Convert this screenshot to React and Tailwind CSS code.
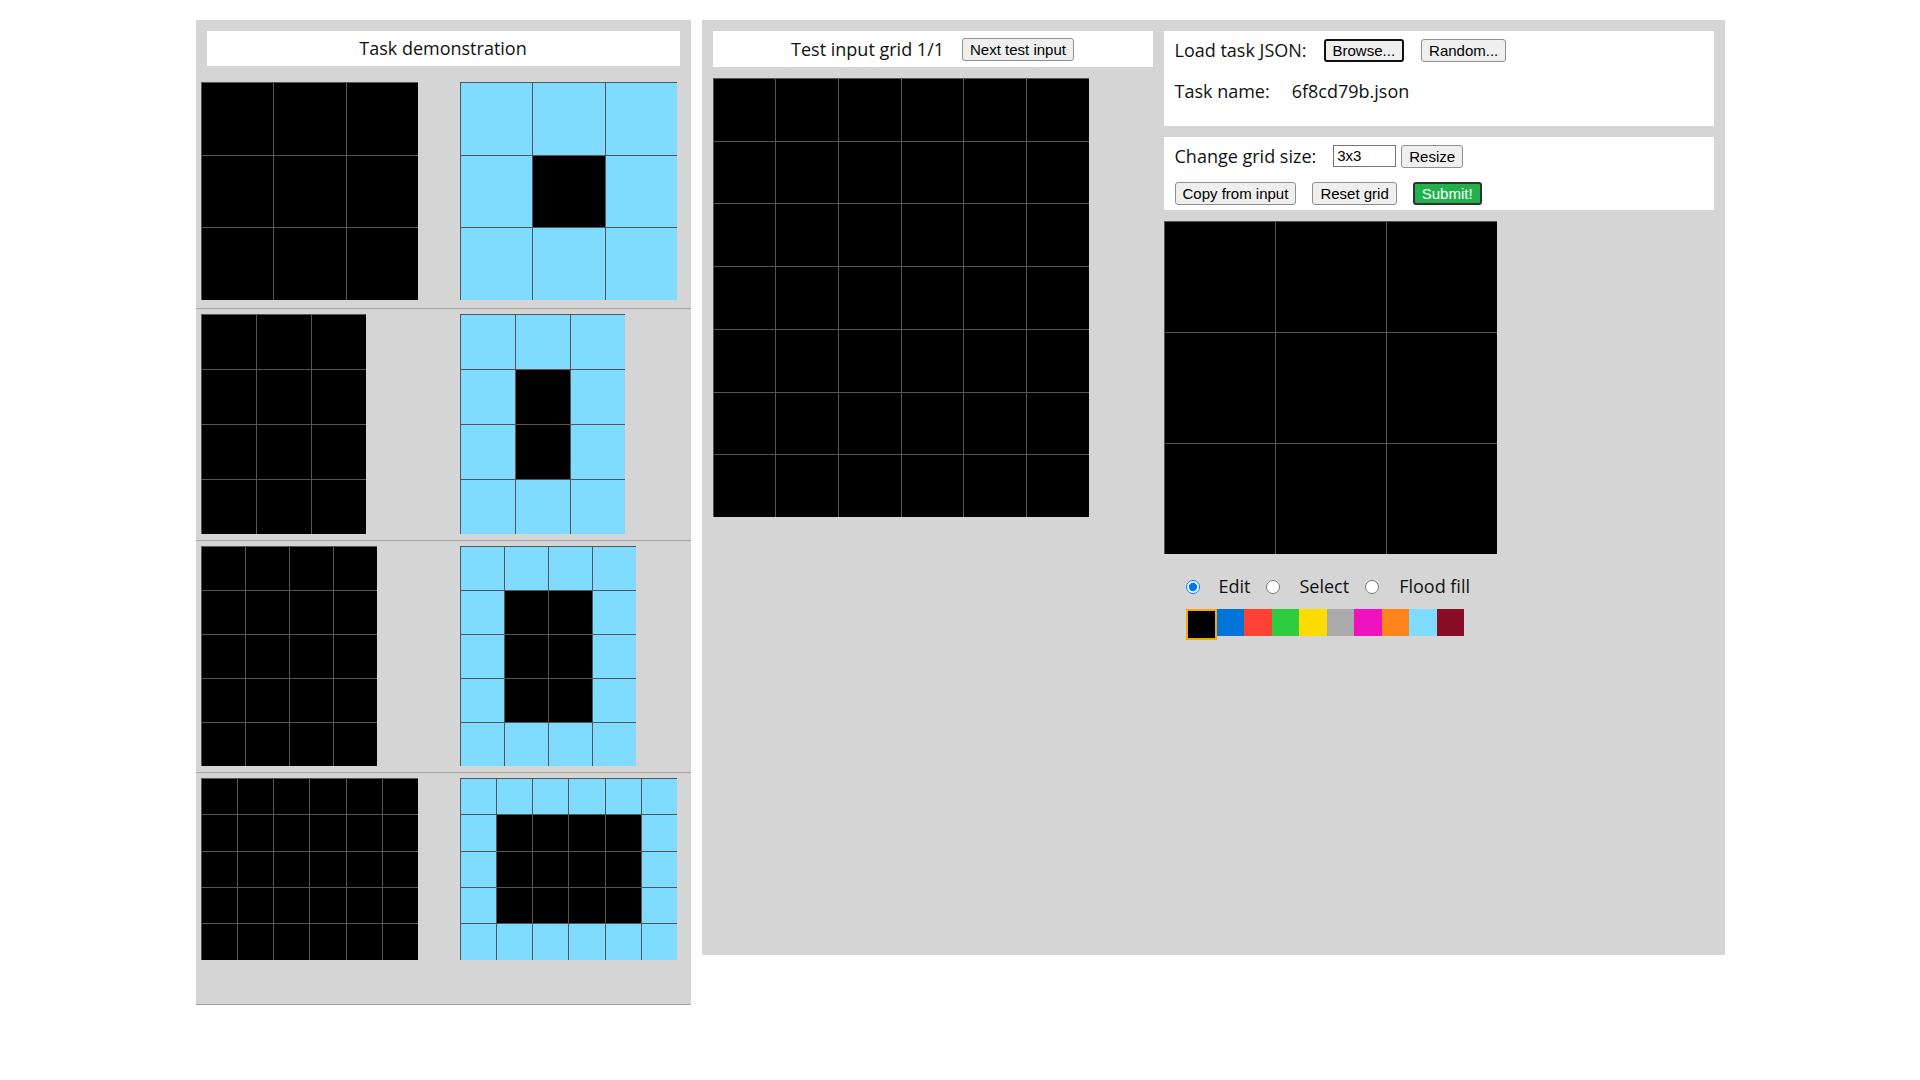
import React from "react";

const CELL = {
  0: "bg-black",
  8: "bg-[#7fdbff]",
};

const PALETTE = [
  "bg-black",
  "bg-[#0074d9]",
  "bg-[#ff4136]",
  "bg-[#2ecc40]",
  "bg-[#ffdc00]",
  "bg-[#aaaaaa]",
  "bg-[#f012be]",
  "bg-[#ff851b]",
  "bg-[#7fdbff]",
  "bg-[#870c25]",
];

function zeros(rows, cols) {
  return Array.from({ length: rows }, () => Array(cols).fill(0));
}

// frame of light blue round a black middle
function frame(rows, cols) {
  return Array.from({ length: rows }, (_, r) =>
    Array.from({ length: cols }, (_, c) =>
      r === 0 || c === 0 || r === rows - 1 || c === cols - 1 ? 8 : 0
    )
  );
}

const pairs = [
  { input: zeros(3, 3), output: frame(3, 3) },
  { input: zeros(4, 3), output: frame(4, 3) },
  { input: zeros(5, 4), output: frame(5, 4) },
  { input: zeros(5, 6), output: frame(5, 6) },
];

function Grid({ data, size }) {
  const rows = data.length;
  const cols = data[0].length;
  const cell = size / Math.max(rows, cols);
  return (
    <div className="flex flex-col">
      {data.map((row, r) => (
        <div key={r} className="flex">
          {row.map((v, c) => (
            <div
              key={c}
              className={`border-t border-l border-[#555] ${CELL[v]}`}
              style={{ width: cell, height: cell }}
            />
          ))}
        </div>
      ))}
    </div>
  );
}

function Btn({ children, className = "" }) {
  return (
    <button
      className={`h-[23px] px-[7px] rounded-[3px] font-['Liberation_Sans',Arial,sans-serif] text-[15px] leading-none ${className}`}
    >
      {children}
    </button>
  );
}

const plain = "bg-[#efefef] border border-[#8f8f8f] text-black";

export default function App() {
  return (
    <div className="min-h-screen bg-white flex justify-center items-start gap-[11px] pt-[20px] font-['Open_Sans',sans-serif] text-[18px] text-[#111]">
      {/* demonstration pairs */}
      <div className="w-[495px] bg-[#d5d5d5] flex flex-col">
        <div className="m-[11px] h-[35px] bg-white flex items-center justify-center">
          Task demonstration
        </div>
        {pairs.map((p, i) => (
          <div
            key={i}
            className="h-[232px] flex items-start pl-[5px] pt-[5px] pb-[6px] border-b border-[#a3a3a3]"
          >
            <div className="w-[259px]">
              <Grid data={p.input} size={i === 1 || i === 2 ? 220 : 218} />
            </div>
            <Grid data={p.output} size={i === 1 || i === 2 ? 220 : 218} />
          </div>
        ))}
      </div>

      <div className="w-[1023px] h-[935px] bg-[#d5d5d5] flex items-start gap-[11px] p-[11px]">
        {/* test input */}
        <div className="w-[440px] flex flex-col">
          <div className="h-[36px] bg-white flex items-center justify-center gap-[18px]">
            <span>Test input grid 1/1</span>
            <Btn className={plain}>Next test input</Btn>
          </div>
          <div className="mt-[11px]">
            <Grid data={zeros(7, 6)} size={439} />
          </div>
        </div>

        {/* output editor */}
        <div className="w-[550px] flex flex-col">
          <div className="h-[95px] bg-white px-[11px] pt-[8px]">
            <div className="h-[23px] flex items-center">
              <span>Load task JSON:</span>
              <Btn className="ml-[17px] bg-[#efefef] border-2 border-[#111] text-black">Browse...</Btn>
              <Btn className={`ml-[17px] ${plain}`}>Random...</Btn>
            </div>
            <div className="mt-[17px] h-[25px] flex items-center">
              <span>Task name:</span>
              <span className="ml-[22px]">6f8cd79b.json</span>
            </div>
          </div>

          <div className="mt-[11px] h-[73px] bg-white px-[11px] pt-[8px]">
            <div className="h-[22px] flex items-center">
              <span>Change grid size:</span>
              <input
                defaultValue="3x3"
                className="ml-[17px] w-[63px] h-[22px] border border-[#767676] px-[3px] font-['Liberation_Sans',Arial,sans-serif] text-[15px] text-black outline-none"
              />
              <Btn className={`ml-[5px] h-[22px] ${plain}`}>Resize</Btn>
            </div>
            <div className="mt-[15px] flex items-center">
              <Btn className={`h-[22px] ${plain}`}>Copy from input</Btn>
              <Btn className={`ml-[16px] h-[22px] ${plain}`}>Reset grid</Btn>
              <Btn className="ml-[16px] h-[22px] bg-[#22b14c] border-2 border-[#333] text-white">Submit!</Btn>
            </div>
          </div>

          <div className="mt-[11px]">
            <Grid data={zeros(3, 3)} size={333} />
          </div>

          <div className="pl-[22px] mt-[20px]">
            <div className="h-[25px] flex items-center">
              <input type="radio" name="tool" defaultChecked className="m-0 w-[14px] h-[14px]" />
              <span className="ml-[19px]">Edit</span>
              <input type="radio" name="tool" className="ml-[16px] w-[14px] h-[14px]" />
              <span className="ml-[19px]">Select</span>
              <input type="radio" name="tool" className="ml-[16px] w-[14px] h-[14px]" />
              <span className="ml-[20px]">Flood fill</span>
            </div>
            <div className="mt-[10px] flex items-start">
              {PALETTE.map((c, i) =>
                i === 0 ? (
                  <div key={i} className={`w-[31px] h-[31px] border-2 border-[#ffa500] ${c}`} />
                ) : (
                  <div key={i} className={`w-[27.5px] h-[27px] ${c}`} />
                )
              )}
            </div>
          </div>
        </div>
      </div>
    </div>
  );
}
